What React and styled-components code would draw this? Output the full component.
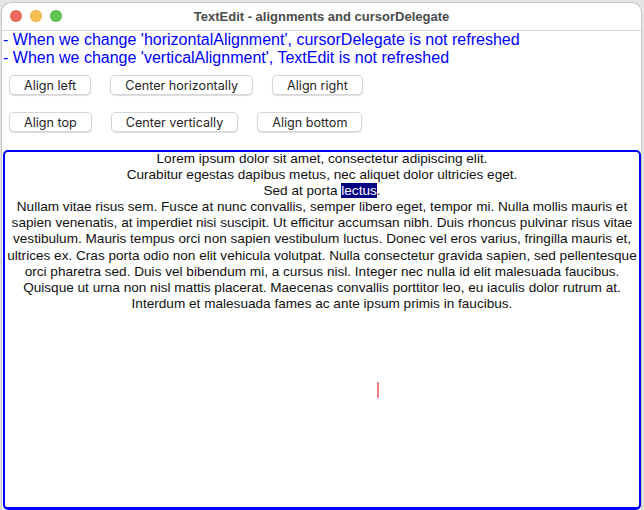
import React from 'react';
import styled, { createGlobalStyle } from 'styled-components';

const GlobalStyle = createGlobalStyle`
	html, body {
		margin: 0;
		padding: 0;
		background: #e4e4e4;
		overflow: hidden;
	}
`;

const Window = styled.div`
	margin: 2px 2px 0 1px;
	height: 508px;
	box-sizing: border-box;
	border: 1px solid #c6c6c6;
	border-bottom: none;
	border-radius: 10px 10px 0 0;
	background: #fff;
	display: flex;
	flex-direction: column;
	overflow: hidden;
`;

const TitleBar = styled.div`
	position: relative;
	height: 27px;
	flex: none;
	border-bottom: 1px solid #d6d6d6;
	display: flex;
	align-items: center;
	justify-content: center;
	font: bold 13px 'Liberation Sans', Arial, sans-serif;
	color: #4b4b4b;
`;

const Lights = styled.div`
	position: absolute;
	left: 8px;
	top: 7px;
	display: flex;
	gap: 8px;
`;

const Light = styled.span`
	width: 12px;
	height: 12px;
	border-radius: 50%;
	background: ${(p) => p.color};
	box-shadow: inset 0 0 0 0.5px rgba(0, 0, 0, 0.15);
`;

const Notes = styled.div`
	padding-left: 1px;
	font: 16px/18px 'Liberation Sans', Arial, sans-serif;
	color: #0000ff;
`;

const ButtonRow = styled.div`
	display: flex;
	gap: 19px;
	padding-left: 7px;
	margin-top: ${(p) => p.top}px;
`;

const Button = styled.button`
	height: 20px;
	padding: 0 14px;
	border: 0.5px solid rgba(0, 0, 0, 0.16);
	border-radius: 5px;
	background: #fff;
	box-shadow: 0 1px 1px rgba(0, 0, 0, 0.14);
	font: 12.6px Inter, 'Liberation Sans', sans-serif;
	color: #262626;
	cursor: default;
`;

const TextArea = styled.div`
	position: relative;
	flex: 1;
	margin: 18px 0 0 1px;
	border: 2px solid #0000ff;
	border-bottom-width: 3px;
	border-radius: 5px;
	padding: 0 1px;
	font: 13.6px/16.1px 'Liberation Sans', Arial, sans-serif;
	color: #111;
	text-align: center;
`;

const Line = styled.div`
	white-space: nowrap;
	margin-top: ${(p) => (p.first ? '-1px' : 0)};
`;

const Selected = styled.span`
	background: #000080;
	color: #fff;
`;

const Cursor = styled.span`
	position: absolute;
	left: 372px;
	top: 230px;
	width: 2px;
	height: 16px;
	background: #f27f7f;
`;

const lines = [
	'Nullam vitae risus sem. Fusce at nunc convallis, semper libero eget, tempor mi. Nulla mollis mauris et',
	'sapien venenatis, at imperdiet nisi suscipit. Ut efficitur accumsan nibh. Duis rhoncus pulvinar risus vitae',
	'vestibulum. Mauris tempus orci non sapien vestibulum luctus. Donec vel eros varius, fringilla mauris et,',
	'ultrices ex. Cras porta odio non elit vehicula volutpat. Nulla consectetur gravida sapien, sed pellentesque',
	'orci pharetra sed. Duis vel bibendum mi, a cursus nisl. Integer nec nulla id elit malesuada faucibus.',
	'Quisque ut urna non nisl mattis placerat. Maecenas convallis porttitor leo, eu iaculis dolor rutrum at.',
	'Interdum et malesuada fames ac ante ipsum primis in faucibus.',
];

export default function App() {
	return (
		<>
			<GlobalStyle />
			<Window>
				<TitleBar>
					<Lights>
						<Light color="#ed6a5e" />
						<Light color="#f5bf4f" />
						<Light color="#61c554" />
					</Lights>
					TextEdit - alignments and cursorDelegate
				</TitleBar>
				<Notes>
					<div>- When we change 'horizontalAlignment', cursorDelegate is not refreshed</div>
					<div>- When we change 'verticalAlignment', TextEdit is not refreshed</div>
				</Notes>
				<ButtonRow top={8}>
					<Button>Align left</Button>
					<Button>Center horizontally</Button>
					<Button>Align right</Button>
				</ButtonRow>
				<ButtonRow top={17}>
					<Button>Align top</Button>
					<Button>Center vertically</Button>
					<Button>Align bottom</Button>
				</ButtonRow>
				<TextArea>
					<Line first>Lorem ipsum dolor sit amet, consectetur adipiscing elit.</Line>
					<Line>Curabitur egestas dapibus metus, nec aliquet dolor ultricies eget.</Line>
					<Line>
						Sed at porta <Selected>lectus</Selected>.
					</Line>
					{lines.map((l) => (
						<Line key={l}>{l}</Line>
					))}
					<Cursor />
				</TextArea>
			</Window>
		</>
	);
}
